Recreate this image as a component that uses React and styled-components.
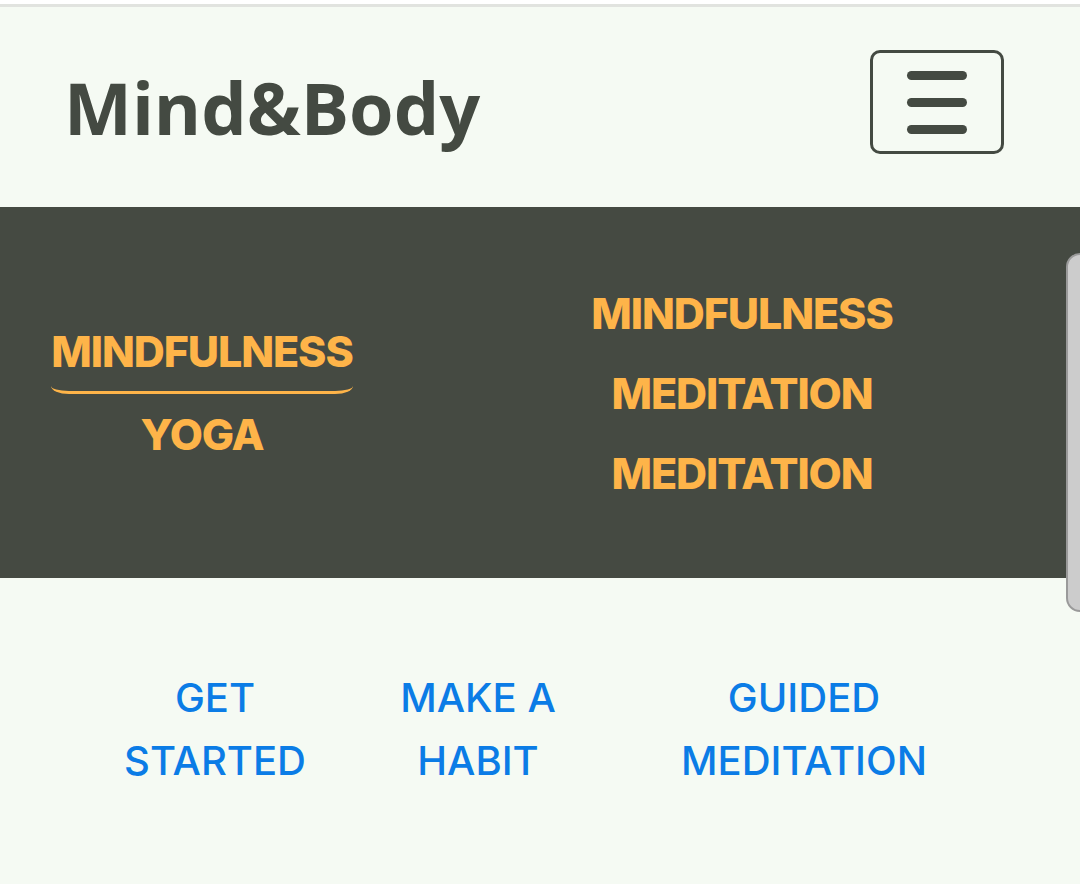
import React from 'react';
import styled, { createGlobalStyle } from 'styled-components';

const Global = createGlobalStyle`
  html, body {
    margin: 0;
    padding: 0;
    background: #f5faf3;
  }
  * { box-sizing: border-box; }
`;

const Page = styled.div`
  position: relative;
  width: 1080px;
  min-height: 884px;
  overflow: hidden;
  background: #f5faf3;
  border-top: 4px solid #ffffff;
`;

const TopLine = styled.div`
  height: 3px;
  background: #e1e3df;
`;

const Header = styled.header`
  height: 200px;
  display: flex;
  justify-content: space-between;
  align-items: center;
  padding: 0 76px 0 64px;
`;

const Logo = styled.a`
  font-family: "Open Sans", Roboto, "Liberation Sans", sans-serif;
  font-weight: 700;
  font-size: 72px;
  color: #444a42;
  text-decoration: none;
`;

const Burger = styled.button`
  width: 134px;
  height: 104px;
  border: 3px solid #444a42;
  border-radius: 10px;
  background: transparent;
  display: flex;
  flex-direction: column;
  align-items: center;
  justify-content: center;
  gap: 18px;
  padding: 0;
  margin-top: -10px;
`;

const BurgerBar = styled.span`
  display: block;
  width: 60px;
  height: 9px;
  border-radius: 5px;
  background: #444a42;
`;

const Band = styled.section`
  height: 371px;
  background: #454a42;
  display: grid;
  grid-template-columns: 404px 1fr;
  align-items: center;
`;

const Column = styled.ul`
  list-style: none;
  margin: 0;
  padding: 0;
  display: flex;
  flex-direction: column;
  align-items: center;
`;

const Topic = styled.li`
  font-family: Inter, "Liberation Sans", sans-serif;
  font-weight: 800;
  font-size: 43px;
  color: #feb449;
  line-height: ${p => (p.tall ? '80px' : '56px')};
  letter-spacing: -1.1px;
  ${p => p.active && `
    padding-bottom: 12px;
    margin-bottom: 12px;
    border-bottom: 3px solid #feb449;
    border-radius: 0 0 18px 18px / 0 0 8px 8px;
  `}
`;

const Track = styled.div`
  position: absolute;
  left: 1066px;
  top: 249px;
  width: 30px;
  height: 359px;
  background: #cccccc;
  border: 2px solid #9a9a9a;
  border-radius: 14px;
`;

const Links = styled.nav`
  display: flex;
  padding: 88px 0 0 100px;
`;

const LinkItem = styled.a`
  width: ${p => p.w}px;
  text-align: center;
  font-family: Inter, "Liberation Sans", sans-serif;
  font-weight: 500;
  font-size: 40px;
  line-height: 63px;
  color: #0b7ce6;
  text-decoration: none;
`;

export default function App() {
  return (
    <>
      <Global />
      <Page>
        <TopLine />
        <Header>
          <Logo href="#">Mind&amp;Body</Logo>
          <Burger aria-label="menu">
            <BurgerBar />
            <BurgerBar />
            <BurgerBar />
          </Burger>
        </Header>
        <Band>
          <Column>
            <Topic active>MINDFULNESS</Topic>
            <Topic>YOGA</Topic>
          </Column>
          <Column>
            <Topic tall>MINDFULNESS</Topic>
            <Topic tall>MEDITATION</Topic>
            <Topic tall>MEDITATION</Topic>
          </Column>
        </Band>
        <Track />
        <Links>
          <LinkItem href="#" w={230}>GET<br />STARTED</LinkItem>
          <LinkItem href="#" w={296}>MAKE A<br />HABIT</LinkItem>
          <LinkItem href="#" w={356}>GUIDED<br />MEDITATION</LinkItem>
        </Links>
      </Page>
    </>
  );
}
